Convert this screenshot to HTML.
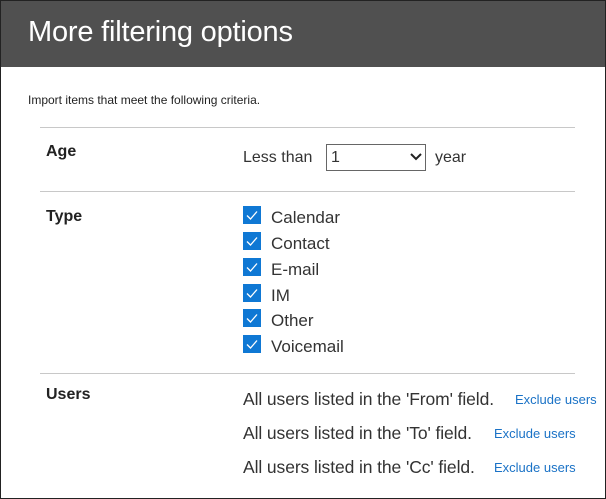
<!DOCTYPE html>
<html><head><style>
*{margin:0;padding:0;box-sizing:border-box}
body{width:606px;height:499px;background:#fff;font-family:"Liberation Sans",sans-serif;color:#333;position:relative;overflow:hidden}
.frame{position:absolute;left:0;top:0;width:606px;height:499px;border:1px solid #222}
.hdr{position:absolute;left:1px;top:1px;width:604px;height:66px;background:#505050}
.t{position:absolute;white-space:nowrap;line-height:1}
.line{position:absolute;left:40px;width:535px;height:1px;background:#c8c8c8}
.cb{position:absolute;left:243px;width:18px;height:18px;background:#0f78d4}
.cb svg{position:absolute;left:0;top:0}
.lnk{color:#1a72c6;font-size:13px}
.u{font-size:17.5px;letter-spacing:-0.1px;color:#333}
</style></head><body>
<div class="hdr"></div>
<div class="t" style="left:28px;top:18px;font-size:29px;color:#fff;letter-spacing:-0.2px">More filtering options</div>
<div class="t" style="left:28px;top:94px;font-size:12px;color:#222">Import items that meet the following criteria.</div>
<div class="line" style="top:127px"></div>
<div class="t" style="left:46px;top:144px;font-size:16px;font-weight:bold;color:#222">Age</div>
<div class="t" style="left:243px;top:150px;font-size:16px">Less than</div>
<div style="position:absolute;left:326px;top:144px;width:100px;height:27px;border:1px solid #666;background:#fff"></div>
<div class="t" style="left:331px;top:150px;font-size:16px">1</div>
<svg style="position:absolute;left:410px;top:152px" width="12" height="10"><path d="M1 2 L6 7 L11 2" stroke="#222" stroke-width="2" fill="none"/></svg>
<div class="t" style="left:435px;top:150px;font-size:16px">year</div>
<div class="line" style="top:191px"></div>
<div class="t" style="left:46px;top:209px;font-size:16px;font-weight:bold;color:#222">Type</div>

<div class="cb" style="top:206px"><svg width="18" height="18"><path d="M4 9.5 L7.5 13 L14 5.5" stroke="#fff" stroke-width="1.3" fill="none"/></svg></div>
<div class="t" style="left:271px;top:209px;font-size:17px">Calendar</div>
<div class="cb" style="top:232px"><svg width="18" height="18"><path d="M4 9.5 L7.5 13 L14 5.5" stroke="#fff" stroke-width="1.3" fill="none"/></svg></div>
<div class="t" style="left:271px;top:235px;font-size:17px">Contact</div>
<div class="cb" style="top:258px"><svg width="18" height="18"><path d="M4 9.5 L7.5 13 L14 5.5" stroke="#fff" stroke-width="1.3" fill="none"/></svg></div>
<div class="t" style="left:271px;top:261px;font-size:17px">E-mail</div>
<div class="cb" style="top:284px"><svg width="18" height="18"><path d="M4 9.5 L7.5 13 L14 5.5" stroke="#fff" stroke-width="1.3" fill="none"/></svg></div>
<div class="t" style="left:271px;top:287px;font-size:17px">IM</div>
<div class="cb" style="top:309px"><svg width="18" height="18"><path d="M4 9.5 L7.5 13 L14 5.5" stroke="#fff" stroke-width="1.3" fill="none"/></svg></div>
<div class="t" style="left:271px;top:312px;font-size:17px">Other</div>
<div class="cb" style="top:335px"><svg width="18" height="18"><path d="M4 9.5 L7.5 13 L14 5.5" stroke="#fff" stroke-width="1.3" fill="none"/></svg></div>
<div class="t" style="left:271px;top:338px;font-size:17px">Voicemail</div>

<div class="line" style="top:373px"></div>
<div class="t" style="left:46px;top:387px;font-size:16px;font-weight:bold;color:#222">Users</div>
<div class="t u" style="left:243px;top:391px">All users listed in the 'From' field.</div>
<div class="t lnk" style="left:515px;top:393px">Exclude users</div>
<div class="t u" style="left:243px;top:425px">All users listed in the 'To' field.</div>
<div class="t lnk" style="left:494px;top:427px">Exclude users</div>
<div class="t u" style="left:243px;top:459px">All users listed in the 'Cc' field.</div>
<div class="t lnk" style="left:494px;top:461px">Exclude users</div>
<div class="frame"></div>
</body></html>
